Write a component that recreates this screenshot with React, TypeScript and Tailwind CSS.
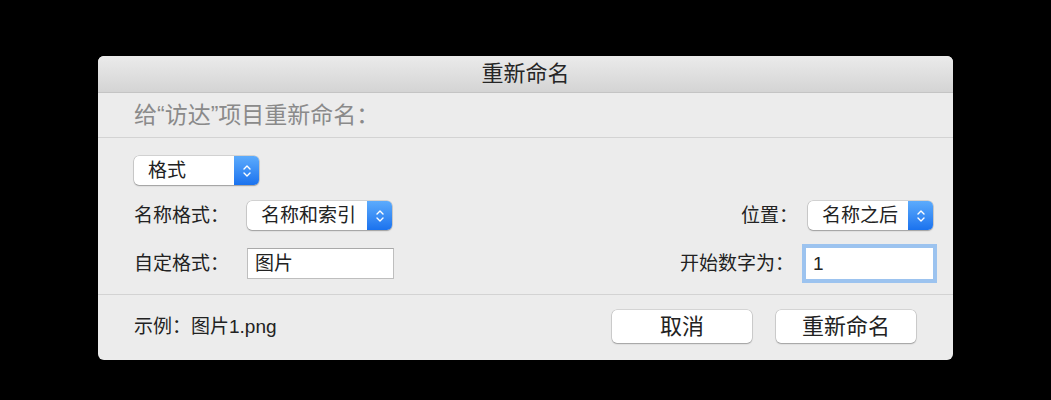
import React from "react";

const FONT = { fontFamily: '"Liberation Sans", "Noto Sans CJK SC", sans-serif' };

// blue stepper part of a macOS popup button
const Stepper = () => (
  <div className="flex h-full w-[25px] items-center justify-center rounded-r-[5px] bg-gradient-to-b from-[#5cabfc] to-[#1a72ee]">
    <svg width="10" height="16" viewBox="0 0 10 16" fill="none">
      <path d="M2 6 L5 3 L8 6" stroke="white" strokeWidth="1.4" strokeLinecap="round" strokeLinejoin="round" />
      <path d="M2 10 L5 13 L8 10" stroke="white" strokeWidth="1.4" strokeLinecap="round" strokeLinejoin="round" />
    </svg>
  </div>
);

const Popup = ({ label, width }: { label: string; width: string }) => (
  <div
    className={`flex h-[29px] ${width} items-center rounded-[5px] bg-white shadow-[0_0_0_0.5px_rgba(0,0,0,0.22),0_1px_1.5px_rgba(0,0,0,0.25)]`}
  >
    <span className="flex-1 pl-[14px] text-[19px] leading-none text-[#222]">{label}</span>
    <Stepper />
  </div>
);

const Button = ({ children }: { children: React.ReactNode }) => (
  <button className="flex h-[33px] w-[140px] items-center justify-center rounded-[5px] bg-white text-[22px] leading-none text-[#222] shadow-[0_0_0_0.5px_rgba(0,0,0,0.2),0_1px_1.5px_rgba(0,0,0,0.25)]">
    {children}
  </button>
);

const App = () => {
  return (
    <div className="h-[400px] w-[1051px] bg-black pl-[98px] pt-[56px]" style={FONT}>
      <div className="flex h-[304px] w-[855px] flex-col overflow-hidden rounded-[6px] bg-[#ececec]">
        {/* Title bar */}
        <div className="flex h-[37px] items-center justify-center border-b border-[#c4c4c4] bg-gradient-to-b from-[#ebebeb] to-[#d4d4d4]">
          <span className="text-[22px] leading-none text-[#262626]">重新命名</span>
        </div>

        {/* Subtitle */}
        <div className="flex h-[45px] items-center border-b border-[#d3d3d3] pl-[36px]">
          <span className="text-[23px] leading-none text-[#8a8a8a]">给“访达”项目重新命名：</span>
        </div>

        {/* Form */}
        <div className="flex flex-col border-b border-[#d3d3d3] pb-[15px] pl-[36px] pr-[20px] pt-[18px] text-[19px] text-[#222]">
          <Popup label="格式" width="w-[125px]" />

          <div className="mt-[16px] flex items-center">
            <span className="w-[113px] leading-none">名称格式：</span>
            <Popup label="名称和索引" width="w-[145px]" />
            <span className="flex-1 pr-[10px] text-right leading-none">位置：</span>
            <Popup label="名称之后" width="w-[125px]" />
          </div>

          <div className="mt-[18px] flex items-center">
            <span className="w-[113px] leading-none">自定格式：</span>
            <div className="flex h-[31px] w-[147px] items-center border border-[#bebebe] border-t-[#a9a9a9] bg-white pl-[7px] leading-none">
              图片
            </div>
            <span className="flex-1 pr-[12px] text-right leading-none">开始数字为：</span>
            <div className="flex h-[31px] w-[127px] items-center bg-white pl-[7px] leading-none ring-[4px] ring-[#9cc3ef]">
              1
            </div>
          </div>
        </div>

        {/* Footer */}
        <div className="flex flex-1 items-center pb-[2px] pl-[36px] pr-[37px]">
          <span className="flex-1 text-[19px] leading-none text-[#222]">示例：图片1.png</span>
          <div className="flex gap-[24px]">
            <Button>取消</Button>
            <Button>重新命名</Button>
          </div>
        </div>
      </div>
    </div>
  );
};

export default App;
